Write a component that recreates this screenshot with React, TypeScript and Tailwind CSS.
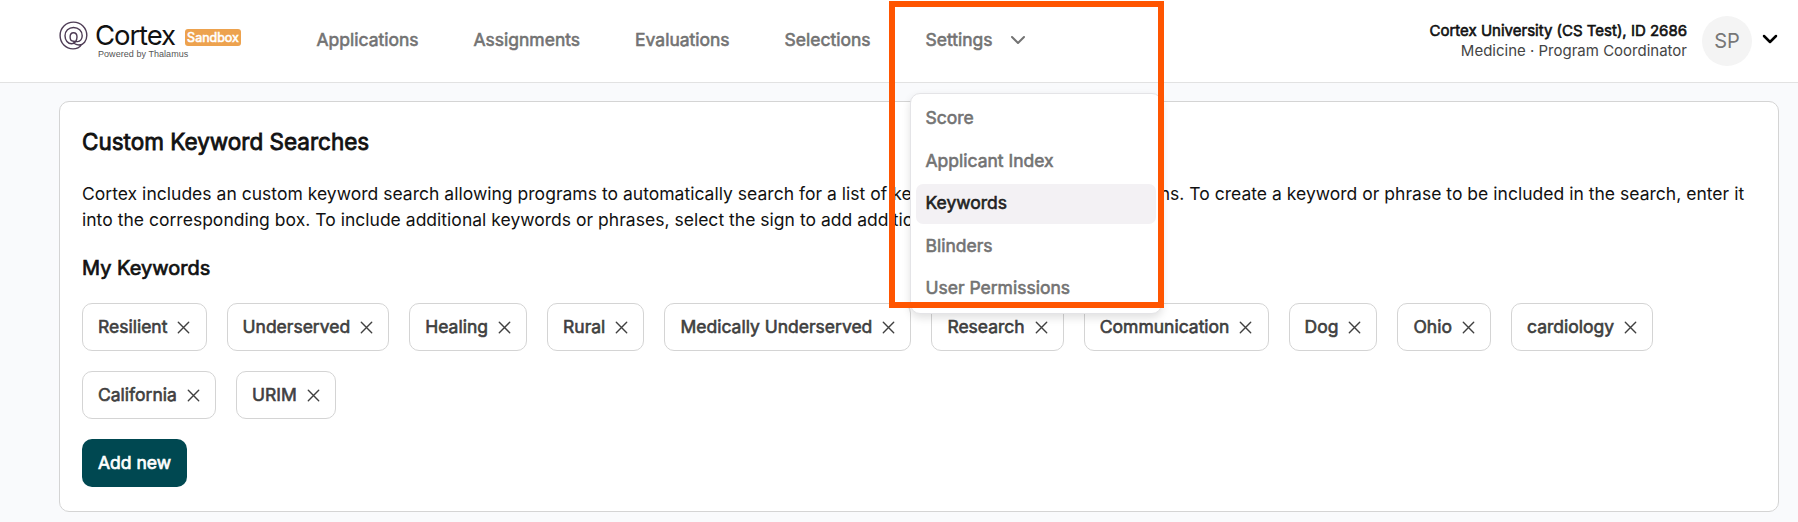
import React from 'react';

interface NavItem {
  label: string;
  hasMenu?: boolean;
}

const navItems: NavItem[] = [
  { label: 'Applications' },
  { label: 'Assignments' },
  { label: 'Evaluations' },
  { label: 'Selections' },
  { label: 'Settings', hasMenu: true },
];

const menuItems = ['Score', 'Applicant Index', 'Keywords', 'Blinders', 'User Permissions'];

const keywords = [
  'Resilient',
  'Underserved',
  'Healing',
  'Rural',
  'Medically Underserved',
  'Research',
  'Communication',
  'Dog',
  'Ohio',
  'cardiology',
  'California',
  'URIM',
];

const Chevron: React.FC<{ className?: string; strokeWidth?: number }> = ({ className = '', strokeWidth = 2 }) => (
  <svg className={className} width="16" height="10" viewBox="0 0 16 10" fill="none" stroke="currentColor" strokeWidth={strokeWidth}>
    <path d="M2 2l6 6 6-6" strokeLinecap="round" strokeLinejoin="round" />
  </svg>
);

const CloseIcon: React.FC = () => (
  <svg className="ml-[10px] shrink-0" width="13" height="13" viewBox="0 0 13 13" fill="none" stroke="currentColor" strokeWidth="1.4">
    <path d="M1.3 1.3l10.4 10.4M11.7 1.3L1.3 11.7" strokeLinecap="round" />
  </svg>
);

const Logo: React.FC = () => (
  <div className="flex items-start">
    <svg className="mt-px" width="29" height="29" viewBox="0 0 29 29" fill="none" stroke="#4d3b54" strokeWidth="1.4">
      <path
        d="M14.5 20.2C12.4 20.2 11.1 18.4 11.1 16C11.1 13.4 12.5 11.8 14.5 11.8C16.6 11.8 18 13.5 18 16C18 19.6 15.8 22.8 12.6 22.8C8.900 22.8 6 19.2 6 14.8C6 10 9.700 6.500 14.500 6.500C19.400 6.500 23.200 10 23.200 14.800C23.200 18 21.200 20.600 18.600 20.600C16.800 20.600 15.800 20.200 14.500 20.200C14.900 22.500 17.200 24 20 24C24.500 24 27.800 19.700 27.800 14.500C27.800 6.900 21.900 1.100 14.500 1.100C6.900 1.100 1.100 6.900 1.100 14.500C1.100 22.100 6.800 27.900 14 27.900C17.400 27.900 20.600 26.400 22.800 23.300"
        strokeLinecap="round"
      />
    </svg>
    <div className="ml-[7px]">
      <div className="flex h-[30px] items-center">
        <span className="w-[81px] text-[27.5px] leading-[30px] tracking-[-1.1px] text-[#111]">Cortex</span>
        <span className="ml-[9px] mt-[4px] h-[17px] w-[56px] rounded-[3px] bg-[#eda24e] text-center text-[12.5px] leading-[17px] text-white [-webkit-text-stroke:0.6px]">
          Sandbox
        </span>
      </div>
      <div className="-mt-px ml-[3px] whitespace-nowrap font-['Liberation_Sans',sans-serif] text-[9px] leading-[10px] tracking-[0.05px] text-[#555]">
        Powered by Thalamus
      </div>
    </div>
  </div>
);

const SettingsMenu: React.FC = () => (
  <div className="absolute left-[-16px] top-[63px] z-10 flex w-[252px] flex-col gap-[2.5px] rounded-[10px] border border-[#e4e4e7] bg-white px-[5px] pb-1 pt-[5px] shadow-[0_4px_8px_rgba(0,0,0,0.12)]">
    {menuItems.map((item) => (
      <div
        key={item}
        className={`h-10 rounded-[7px] px-[10px] leading-[38px] ${item === 'Keywords' ? 'bg-[#f3f1f4] text-[#222]' : 'text-[#737373]'}`}
      >
        {item}
      </div>
    ))}
  </div>
);

const Header: React.FC = () => (
  <header className="flex h-[83px] items-start border-b border-[#e2e2e2] bg-white pl-[59px] pr-5">
    <div className="w-[257.5px] pt-[20px]">
      <Logo />
    </div>
    <nav className="flex gap-[55px] pt-[30px] text-[17.5px] leading-5 text-[#737373] [-webkit-text-stroke:0.6px]">
      {navItems.map(({ label, hasMenu }) => (
        <div key={label} className="relative flex items-center">
          {label}
          {hasMenu && <Chevron className="ml-[17px]" />}
          {hasMenu && <SettingsMenu />}
        </div>
      ))}
    </nav>
    <div className="ml-auto flex items-center pt-4">
      <div className="text-right text-[15px] leading-5">
        <div className="text-[#111] [-webkit-text-stroke:0.6px]">Cortex University (CS Test), ID 2686</div>
        <div className="text-[#444]">Medicine · Program Coordinator</div>
      </div>
      <div className="ml-[15px] flex size-[50px] items-center justify-center rounded-full bg-[#f4f4f4] text-[20px] text-[#777]">
        SP
      </div>
      <Chevron className="-mt-1 ml-[10px] text-black" strokeWidth={2.5} />
    </div>
  </header>
);

const App: React.FC = () => (
  <div className="relative h-[522px] overflow-hidden bg-[#f9fafc] font-['Inter',sans-serif]">
    <Header />
    <main className="ml-[59px] mr-[19px] mt-[18px] h-[411px] rounded-[10px] border border-[#d4d4d4] bg-white px-[22px] pt-[25px]">
      <h1 className="text-[22.5px] leading-[30px] text-[#111] [-webkit-text-stroke:0.8px]">Custom Keyword Searches</h1>
      <p className="mt-[23.5px] text-[17.5px] leading-[26px] tracking-[0.02px] text-[#111]">
        <span className="block whitespace-nowrap">
          Cortex includes an custom keyword search allowing programs to automatically search for a list of keywords
          across their applications. To create a keyword or phrase to be included in the search, enter it
        </span>
        <span className="block whitespace-nowrap">
          into the corresponding box. To include additional keywords or phrases, select the sign to add additional boxes.
        </span>
      </p>
      <h2 className="mt-[21.5px] text-[20px] leading-7 text-[#111] [-webkit-text-stroke:0.7px]">My Keywords</h2>
      <div className="mt-[21px] flex flex-wrap gap-5">
        {keywords.map((word) => (
          <div
            key={word}
            className="flex h-12 items-center rounded-[10px] border border-[#d4d4d4] pl-[15px] pr-[15.1px] text-[17.5px] text-[#404040]"
          >
            <span className="pt-px [-webkit-text-stroke:0.6px]">{word}</span>
            <CloseIcon />
          </div>
        ))}
      </div>
      <button className="mt-5 h-12 rounded-[10px] bg-[#004851] px-4 pt-px text-[17.5px] text-white [-webkit-text-stroke:0.7px]">
        Add new
      </button>
    </main>
    {/* Callout frame around the settings menu */}
    <div className="absolute left-[889px] top-px z-20 h-[307px] w-[275px] border-[6px] border-[#ff5500]" />
  </div>
);

export default App;
